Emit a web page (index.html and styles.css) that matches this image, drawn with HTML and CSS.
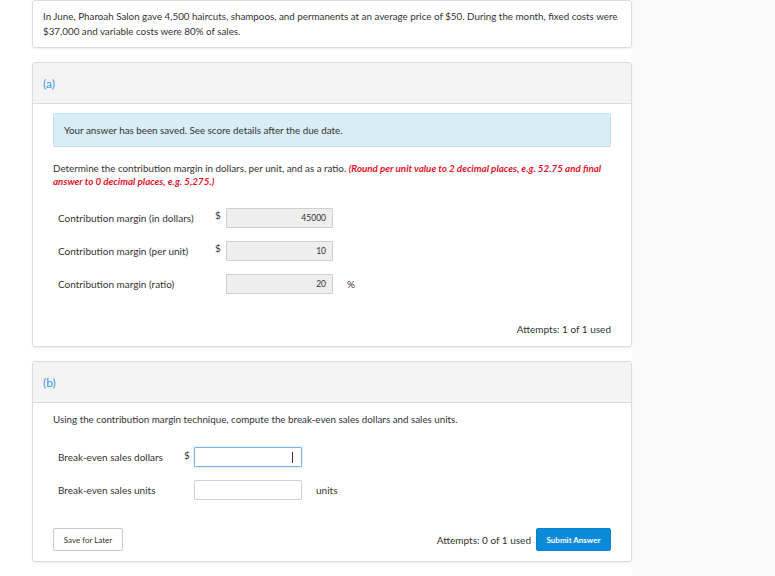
FILE: index.html
```html
<!DOCTYPE html>
<html>
<head>
<meta charset="utf-8">
<link rel="stylesheet" href="styles.css">
</head>
<body>
<div class="page">
  <div class="card intro">
    In June, Pharoah Salon gave 4,500 haircuts, shampoos, and permanents at an average price of $50. During the month, fixed costs were $37,000 and variable costs were 80% of sales.
  </div>

  <div class="card part">
    <div class="part-head">(a)</div>
    <div class="part-body">
      <div class="alert">Your answer has been saved. See score details after the due date.</div>
      <p class="question">Determine the contribution margin in dollars, per unit, and as a ratio. <em class="hint">(Round per unit value to 2 decimal places, e.g. 52.75 and final answer to 0 decimal places, e.g. 5,275.)</em></p>
      <div class="rows rows-a">
        <div class="row">
          <span class="label">Contribution margin (in dollars)</span>
          <span class="cur">$</span>
          <span class="field done">45000</span>
        </div>
        <div class="row">
          <span class="label">Contribution margin (per unit)</span>
          <span class="cur">$</span>
          <span class="field done">10</span>
        </div>
        <div class="row">
          <span class="label">Contribution margin (ratio)</span>
          <span class="cur"></span>
          <span class="field done">20</span>
          <span class="unit">%</span>
        </div>
      </div>
      <div class="footer footer-a">
        <span class="attempts">Attempts: 1 of 1 used</span>
      </div>
    </div>
  </div>

  <div class="card part">
    <div class="part-head">(b)</div>
    <div class="part-body">
      <p class="question q-b">Using the contribution margin technique, compute the break-even sales dollars and sales units.</p>
      <div class="rows rows-b">
        <div class="row">
          <span class="label">Break-even sales dollars</span>
          <span class="cur">$</span>
          <span class="field focus"><span class="caret"></span></span>
        </div>
        <div class="row">
          <span class="label">Break-even sales units</span>
          <span class="cur"></span>
          <span class="field"></span>
          <span class="unit units">units</span>
        </div>
      </div>
      <div class="footer footer-b">
        <button class="btn save">Save for Later</button>
        <span class="spacer"></span>
        <span class="attempts">Attempts: 0 of 1 used</span>
        <button class="btn submit">Submit Answer</button>
      </div>
    </div>
  </div>
</div>
</body>
</html>
```

FILE: styles.css
```css
html, body {
  margin: 0;
  padding: 0;
  background: #fafafa;
}
body {
  font-family: Lato, "Open Sans", sans-serif;
  font-size: 10px;
  color: #333;
}
.page {
  width: 600px;
  min-height: 576px;
  background: #fff;
  padding: 0 0 1px 32px;
  box-sizing: content-box;
}
.card {
  background: #fff;
  border: 1px solid #dcdcdc;
  border-radius: 3px;
  box-shadow: 0 1px 2px rgba(0,0,0,0.08);
  box-sizing: border-box;
}
.intro {
  padding: 8px 10px 8px 10px;
  line-height: 15px;
  height: 48px;
  font-size: 9.8px;
}
.part {
  margin-top: 14px;
}
.part-head {
  background: #f4f4f4;
  border-bottom: 1px solid #dcdcdc;
  height: 40px;
  padding-left: 10px;
  display: flex;
  align-items: center;
  font-size: 12px;
  color: #3a97d8;
}
.part-body {
  padding: 10px 20px 10px 20px;
}
.alert {
  background: #d9edf7;
  border: 1px solid #bfe2ef;
  border-radius: 2px;
  height: 34px;
  box-sizing: border-box;
  padding: 0 10px;
  display: flex;
  align-items: center;
  font-size: 9.8px;
  margin-top: -1px;
}
.question {
  margin: 15px 0 0 0;
  line-height: 13px;
  font-size: 9.8px;
}
.q-b {
  margin-top: 0;
}
.hint {
  color: #e3132d;
  font-weight: bold;
}
.rows {
  margin-top: 20px;
  display: flex;
  flex-direction: column;
  gap: 13px;
  padding-left: 5px;
}
.rows-b {
  margin-top: 21px;
}
.row {
  display: flex;
  align-items: center;
  height: 20px;
}
.label {
  width: 157px;
}
.rows-b .label {
  width: 126px;
}
.cur {
  width: 11px;
  align-self: flex-start;
  line-height: 15px;
}
.rows-b .cur {
  width: 10px;
  line-height: 17px;
}
.field {
  width: 107px;
  height: 20px;
  box-sizing: border-box;
  border: 1px solid #cfcfcf;
  border-radius: 1px;
  background: #fff;
  display: flex;
  align-items: center;
  justify-content: flex-end;
  padding-right: 6px;
  font-size: 8.5px;
}
.field.done {
  background: #eeeeee;
}
.rows-b .field {
  width: 108px;
}
.field.focus {
  border-color: #7fb6e6;
  box-shadow: 0 0 2px rgba(80,150,220,0.5);
  padding-right: 8px;
}
.caret {
  display: block;
  width: 1px;
  height: 11px;
  background: #333;
}
.unit {
  margin-left: 14px;
}
.units {
  margin-left: 14px;
}
.footer {
  display: flex;
  align-items: center;
  justify-content: flex-end;
}
.footer-a {
  margin-top: 27px;
  height: 15px;
}
.footer-b {
  margin-top: 28px;
}
.spacer {
  flex: 1;
}
.attempts {
  font-size: 10px;
}
.btn {
  font-family: Lato, "Open Sans", sans-serif;
  height: 23px;
  border-radius: 2px;
  font-size: 8px;
  padding: 0;
  cursor: pointer;
}
.save {
  width: 70px;
  background: #fff;
  border: 1px solid #c8c8c8;
  color: #333;
}
.submit {
  margin-left: 5px;
  background: #0a8bda;
  border: 1px solid #0a84cf;
  color: #fff;
  font-weight: bold;
  width: 75px;
}
```
